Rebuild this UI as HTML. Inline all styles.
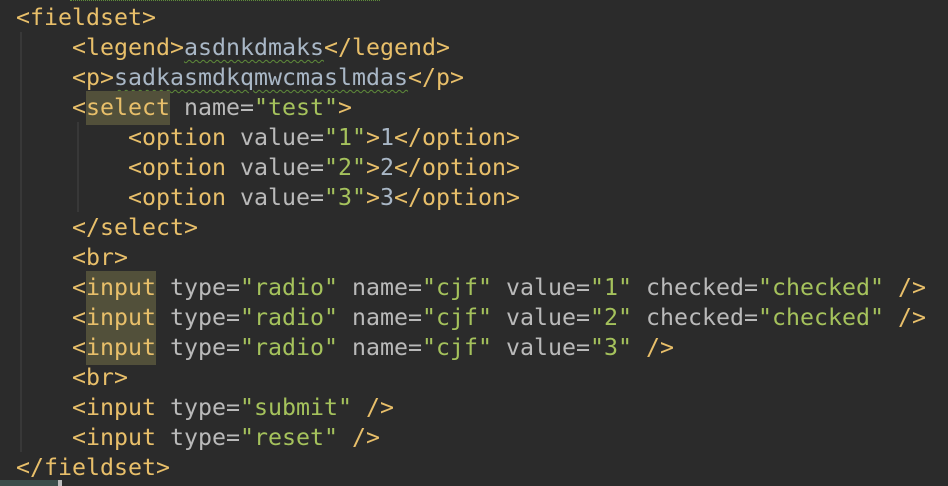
<!DOCTYPE html>
<html><head><style>
body{margin:0;background:#2b2b2b;width:948px;height:486px;overflow:hidden;position:relative}
.c{position:absolute;left:16px;top:3px;font-family:"DejaVu Sans Mono","Liberation Mono",monospace;font-size:23.25px;line-height:30px;white-space:pre;color:#a9b7c6}
.t{color:#e8bf6a}.a{color:#bababa}.v{color:#a5c25c}
.h{background:#52503a;padding:3px 0 4px}
.w{text-decoration:underline wavy #5f8c3a;text-decoration-thickness:1px;text-underline-offset:4px}
.g{position:absolute;width:2px;background:#383838}
</style></head><body>
<div class="g" style="left:20px;top:32px;height:420px"></div>
<div class="g" style="left:77px;top:122px;height:90px"></div>
<div style="position:absolute;left:0;top:480px;width:58px;height:6px;background:#3b4d4a"></div>
<div style="position:absolute;left:58px;top:480px;width:4px;height:6px;background:#bbb"></div>
<div style="position:absolute;left:70px;top:0;width:310px;height:2px;border-top:1px dotted #5f8c3a"></div>
<div class="c"><span class="t">&lt;fieldset&gt;</span>
    <span class="t">&lt;legend&gt;</span><span class="w">asdnkdmaks</span><span class="t">&lt;/legend&gt;</span>
    <span class="t">&lt;p&gt;</span><span class="w">sadkasmdkqmwcmaslmdas</span><span class="t">&lt;/p&gt;</span>
    <span class="t">&lt;<span class="h">select</span></span> <span class="a">name=</span><span class="v">"test"</span><span class="t">&gt;</span>
        <span class="t">&lt;option</span> <span class="a">value=</span><span class="v">"1"</span><span class="t">&gt;</span>1<span class="t">&lt;/option&gt;</span>
        <span class="t">&lt;option</span> <span class="a">value=</span><span class="v">"2"</span><span class="t">&gt;</span>2<span class="t">&lt;/option&gt;</span>
        <span class="t">&lt;option</span> <span class="a">value=</span><span class="v">"3"</span><span class="t">&gt;</span>3<span class="t">&lt;/option&gt;</span>
    <span class="t">&lt;/select&gt;</span>
    <span class="t">&lt;br&gt;</span>
    <span class="t">&lt;<span class="h">input</span></span> <span class="a">type=</span><span class="v">"radio"</span> <span class="a">name=</span><span class="v">"cjf"</span> <span class="a">value=</span><span class="v">"1"</span> <span class="a">checked=</span><span class="v">"checked"</span> <span class="t">/&gt;</span>
    <span class="t">&lt;<span class="h">input</span></span> <span class="a">type=</span><span class="v">"radio"</span> <span class="a">name=</span><span class="v">"cjf"</span> <span class="a">value=</span><span class="v">"2"</span> <span class="a">checked=</span><span class="v">"checked"</span> <span class="t">/&gt;</span>
    <span class="t">&lt;<span class="h">input</span></span> <span class="a">type=</span><span class="v">"radio"</span> <span class="a">name=</span><span class="v">"cjf"</span> <span class="a">value=</span><span class="v">"3"</span> <span class="t">/&gt;</span>
    <span class="t">&lt;br&gt;</span>
    <span class="t">&lt;input</span> <span class="a">type=</span><span class="v">"submit"</span> <span class="t">/&gt;</span>
    <span class="t">&lt;input</span> <span class="a">type=</span><span class="v">"reset"</span> <span class="t">/&gt;</span>
<span class="t">&lt;/fieldset&gt;</span></div>
</body></html>
